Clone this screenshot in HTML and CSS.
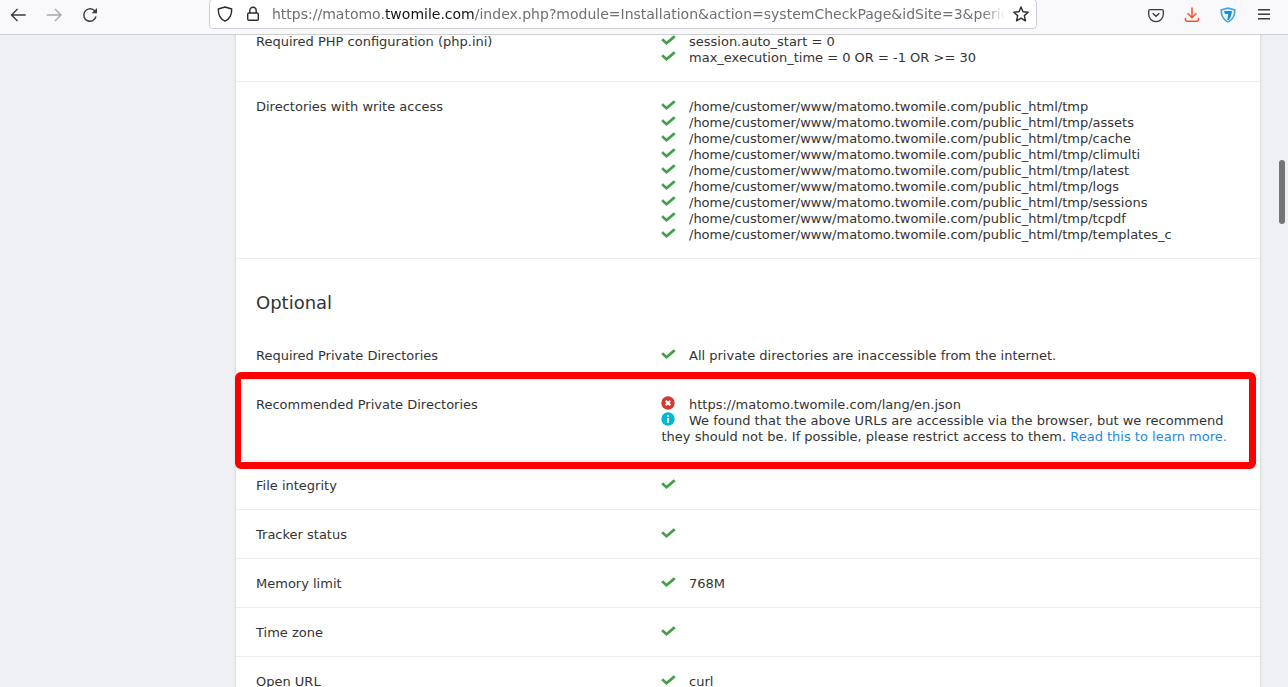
FILE: index.html
```html
<!DOCTYPE html>
<html lang="en">
<head>
<meta charset="utf-8">
<title>Matomo system check</title>
<link rel="stylesheet" href="styles.css">
</head>
<body>
<svg class="defs" width="0" height="0" aria-hidden="true">
  <symbol id="ok" viewBox="0 0 15 10"><path d="M.2 5.200 2.100 3.300 5.500 6.500 12.700.3 14.700 2.300 5.500 10Z" fill="#43a047"/></symbol>
</svg>
<header class="toolbar">
  <div class="nav">
    <svg class="tb-icon" viewBox="0 0 16 16"><path d="M15.700 8H2M7.500 2 1.500 8l6 6" fill="none" stroke="#3a3a40" stroke-width="1.400"/></svg>
    <svg class="tb-icon" viewBox="0 0 16 16"><path d="M.7 8H14M9 2l6 6-6 6" fill="none" stroke="#a8a8ac" stroke-width="1.400"/></svg>
    <svg class="tb-icon" viewBox="0 0 16 16"><path d="M14 9.500A6.200 6.200 0 1 1 12 3.300L14 5.300" fill="none" stroke="#3a3a40" stroke-width="1.400"/><path d="M15 1v5.300H9.700z" fill="#3a3a40"/></svg>
  </div>
  <div class="urlbar">
    <svg class="shield" viewBox="0 0 16 16"><path d="M8 1 14.700 3c.2 6-2 10-6.700 12.200C3.300 13 1.100 9 1.300 3z" fill="none" stroke="#2b2b30" stroke-width="1.400" stroke-linejoin="round"/></svg>
    <svg class="lock" viewBox="0 0 14 16"><path d="M3.800 7V4.500a3.200 3.200 0 0 1 6.400 0V7" fill="none" stroke="#2b2b30" stroke-width="1.400"/><rect x="1.700" y="7" width="10.600" height="7.300" rx="1.300" fill="none" stroke="#2b2b30" stroke-width="1.400"/></svg>
    <div class="url"><span class="url-dim">https://matomo.</span><span class="url-host">twomile.com</span><span class="url-dim">/index.php?module=Installation&amp;action=systemCheckPage&amp;idSite=3&amp;period=day&amp;date=yesterday</span></div>
    <svg class="star" viewBox="0 0 16 16"><path d="M8 1 10 5.700 15.200 6.200 11.300 9.600 12.500 14.800 8 12.100 3.500 14.800 4.700 9.600.8 6.200 6 5.700Z" fill="none" stroke="#2b2b30" stroke-width="1.400" stroke-linejoin="round"/></svg>
  </div>
  <div class="tools">
    <svg class="tb-icon" viewBox="0 0 16 16"><path d="M2 2.700h12c.8 0 1.300.5 1.300 1.300v3.300A7.300 7.300 0 0 1 .7 7.300V4c0-.8.5-1.300 1.300-1.300z" fill="none" stroke="#3a3a40" stroke-width="1.300"/><path d="M4.700 6.200 8 9.300l3.300-3.100" fill="none" stroke="#3a3a40" stroke-width="1.400"/></svg>
    <svg class="tb-icon" viewBox="0 0 16 16"><path d="M8 .5v10M3.600 6.300 8 10.700l4.400-4.400" fill="none" stroke="#f0522b" stroke-width="1.500"/><path d="M1.500 10.800v2c0 .9.600 1.400 1.400 1.400h10.200c.8 0 1.400-.5 1.400-1.400v-2" fill="none" stroke="#f0522b" stroke-width="1.500"/></svg>
    <svg class="tb-icon" viewBox="0 0 16 16"><path d="M8 .3 15.600 2.200C15.800 8.800 13.200 13.200 8 15.800 2.800 13.200.2 8.800.4 2.200Z" fill="#3aa7e0"/><path d="M8 2 14 3.500C14 8.600 12 12.100 8 14.200 4 12.100 2 8.600 2 3.500Z" fill="#e8f5fc"/><path d="M4 4 12 4 11.500 7C11 9.200 10.200 11.200 8.900 13H7.300L8.300 7H5Z" fill="#1e8ed0"/></svg>
    <svg class="tb-icon" viewBox="0 0 16 16"><path d="M2 2.700h12M2 7.200h12M2 11.700h12" fill="none" stroke="#3a3a40" stroke-width="1.400"/></svg>
  </div>
</header>
<main class="page">
  <section class="card">
    <div class="row">
      <div>Required PHP configuration (php.ini)</div>
      <div>
        <div class="line"><svg class="check"><use href="#ok"/></svg>session.auto_start = 0</div>
        <div class="line"><svg class="check"><use href="#ok"/></svg>max_execution_time = 0 OR = -1 OR &gt;= 30</div>
      </div>
    </div>
    <div class="row">
      <div>Directories with write access</div>
      <div>
        <div class="line"><svg class="check"><use href="#ok"/></svg>/home/customer/www/matomo.twomile.com/public_html/tmp</div>
        <div class="line"><svg class="check"><use href="#ok"/></svg>/home/customer/www/matomo.twomile.com/public_html/tmp/assets</div>
        <div class="line"><svg class="check"><use href="#ok"/></svg>/home/customer/www/matomo.twomile.com/public_html/tmp/cache</div>
        <div class="line"><svg class="check"><use href="#ok"/></svg>/home/customer/www/matomo.twomile.com/public_html/tmp/climulti</div>
        <div class="line"><svg class="check"><use href="#ok"/></svg>/home/customer/www/matomo.twomile.com/public_html/tmp/latest</div>
        <div class="line"><svg class="check"><use href="#ok"/></svg>/home/customer/www/matomo.twomile.com/public_html/tmp/logs</div>
        <div class="line"><svg class="check"><use href="#ok"/></svg>/home/customer/www/matomo.twomile.com/public_html/tmp/sessions</div>
        <div class="line"><svg class="check"><use href="#ok"/></svg>/home/customer/www/matomo.twomile.com/public_html/tmp/tcpdf</div>
        <div class="line"><svg class="check"><use href="#ok"/></svg>/home/customer/www/matomo.twomile.com/public_html/tmp/templates_c</div>
      </div>
    </div>
    <h2 class="section-title">Optional</h2>
    <div class="row row-plain">
      <div>Required Private Directories</div>
      <div><div class="line"><svg class="check"><use href="#ok"/></svg>All private directories are inaccessible from the internet.</div></div>
    </div>
    <div class="row">
      <div>Recommended Private Directories</div>
      <div>
        <div class="line"><svg class="status" viewBox="0 0 14 14"><circle cx="7" cy="7" r="6.700" fill="#d4382f"/><path d="M4.700 4.700l4.600 4.600M9.300 4.700l-4.600 4.600" stroke="#fff" stroke-width="2"/></svg>https://matomo.twomile.com/lang/en.json</div>
        <div class="line"><svg class="status" viewBox="0 0 14 14"><circle cx="7" cy="7" r="6.700" fill="#00b8d4"/><path d="M7 3v1.700M7 6v4.700" stroke="#fff" stroke-width="2"/></svg>We found that the above URLs are accessible via the browser, but we recommend they should not be. If possible, please restrict access to them. <a class="link" href="#">Read this to learn more.</a></div>
      </div>
    </div>
    <div class="row">
      <div>File integrity</div>
      <div><div class="line"><svg class="check"><use href="#ok"/></svg></div></div>
    </div>
    <div class="row">
      <div>Tracker status</div>
      <div><div class="line"><svg class="check"><use href="#ok"/></svg></div></div>
    </div>
    <div class="row">
      <div>Memory limit</div>
      <div><div class="line"><svg class="check"><use href="#ok"/></svg>768M</div></div>
    </div>
    <div class="row">
      <div>Time zone</div>
      <div><div class="line"><svg class="check"><use href="#ok"/></svg></div></div>
    </div>
    <div class="row">
      <div>Open URL</div>
      <div><div class="line"><svg class="check"><use href="#ok"/></svg>curl</div></div>
    </div>
  </section>
  <div class="highlight"></div>
  <div class="scroll-thumb"></div>
</main>
</body>
</html>
```
FILE: styles.css
```css
* { box-sizing: border-box; }
html, body { margin: 0; height: 100%; overflow: hidden; }
body {
  display: flex;
  flex-direction: column;
  background: #eff0f3;
  font-family: "DejaVu Sans", sans-serif;
  font-size: 13px;
  line-height: 16px;
  color: #333;
}
.defs { position: absolute; }

.toolbar {
  flex: 0 0 35px;
  display: flex;
  align-items: flex-start;
  background: #f9f9fb;
  border-bottom: 1px solid #cfcfd3;
  position: relative;
  z-index: 2;
}
.tb-icon { width: 16px; height: 16px; display: block; }
.nav {
  flex: 0 0 209px;
  display: flex;
  gap: 20px;
  padding: 7px 0 0 10px;
}
.urlbar {
  flex: 0 0 828px;
  min-width: 0;
  height: 30px;
  margin-top: -1px;
  background: #fff;
  border: 1px solid #cfcfd8;
  border-radius: 4px;
  display: flex;
  align-items: center;
  padding: 0 7px;
}
.shield { width: 16px; height: 16px; flex: none; }
.lock { width: 14px; height: 16px; flex: none; margin-left: 13px; }
.url {
  flex: 1;
  min-width: 0;
  margin-left: 12px;
  overflow: hidden;
  white-space: nowrap;
  font-family: "DejaVu Sans", sans-serif;
  font-size: 14px;
  -webkit-mask-image: linear-gradient(to right, #000 97%, transparent);
  mask-image: linear-gradient(to right, #000 97%, transparent);
}
.url-dim { color: #6f6f75; }
.url-host { color: #15141a; }
.star { width: 16px; height: 16px; flex: none; margin-left: 8px; }
.tools {
  flex: 1;
  min-width: 0;
  display: flex;
  gap: 20px;
  padding: 7px 0 0 111px;
}

.page {
  flex: 1;
  min-height: 0;
  position: relative;
  overflow: hidden;
}
.card {
  width: 1024px;
  margin: -19px 0 0 236px;
  background: #fff;
  box-shadow: 0 0 3px rgba(0, 0, 0, .18);
}
.row {
  display: grid;
  grid-template-columns: 405.5px 1fr;
  padding: 17px 20px 15px;
  border-top: 1px solid #eee;
}
.row-plain { border-top: 0; }
.section-title {
  margin: 0;
  padding: 32px 20px 16px;
  border-top: 1px solid #eee;
  font-size: 18px;
  line-height: 24px;
  font-weight: 400;
  height: 73px;
}
.line { min-height: 16px; }
.check {
  width: 15px;
  height: 10px;
  margin: 0 13px 0 -.5px;
  vertical-align: 1px;
}
.status {
  width: 14px;
  height: 14px;
  margin: -1px 14px 0 -.5px;
  vertical-align: -1px;
}
.link { color: #1e88e5; text-decoration: none; }

.highlight {
  position: absolute;
  left: 235px;
  top: 337px;
  width: 1021px;
  height: 97px;
  border: 7px solid #f00;
  border-left-width: 6px;
  border-radius: 6px;
}
.scroll-thumb {
  position: absolute;
  left: 1279px;
  top: 125px;
  width: 6px;
  height: 64px;
  border-radius: 3px;
  background: #757575;
}
```
